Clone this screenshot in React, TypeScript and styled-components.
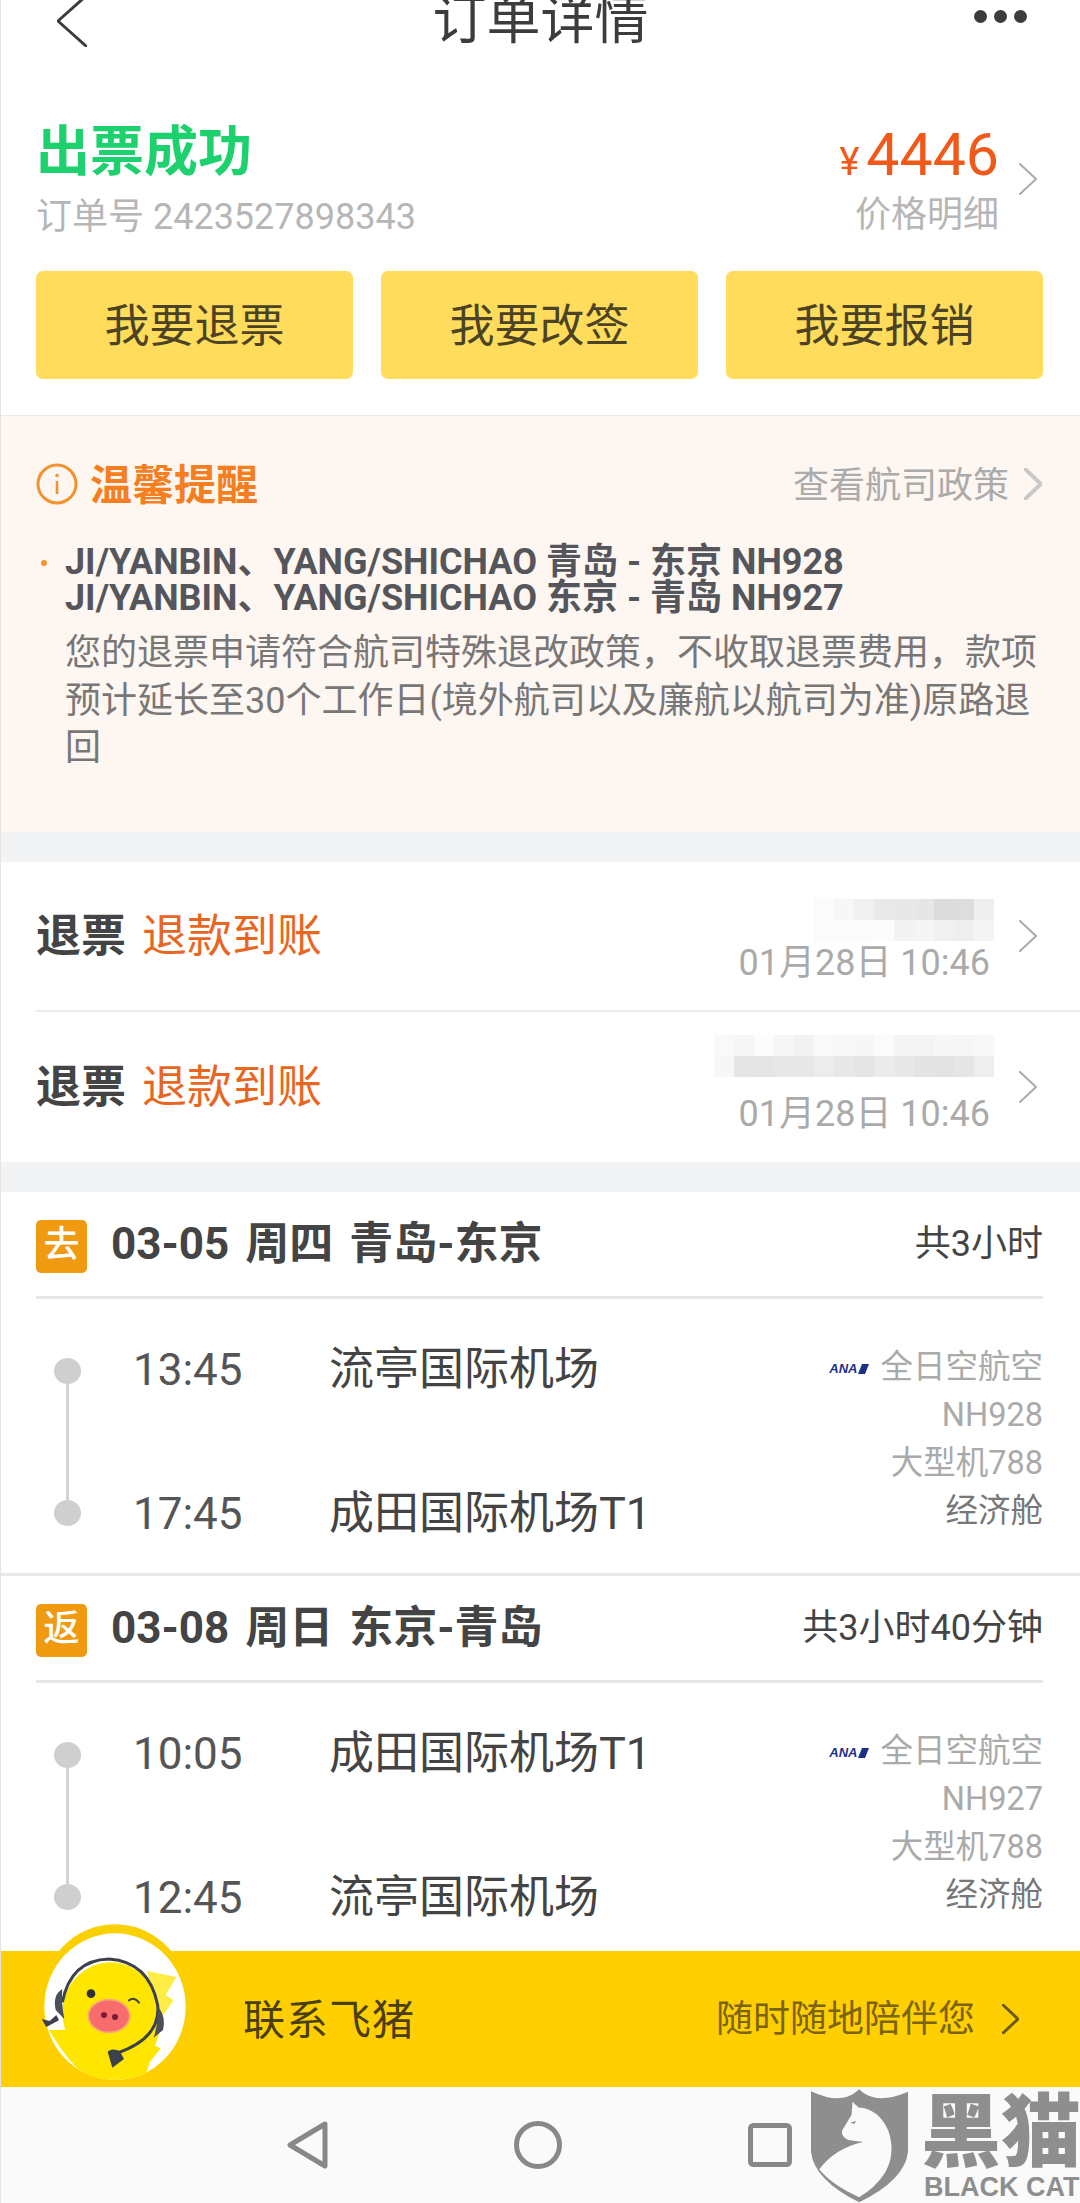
import React from "react";
import styled, { createGlobalStyle } from "styled-components";

const GlobalStyle = createGlobalStyle`
	html, body {
		margin: 0;
		padding: 0;
		background: #fff;
	}
	body {
		font-family: Roboto, "Noto Sans CJK SC", sans-serif;
	}
	* {
		box-sizing: border-box;
	}
`;

const Page = styled.div`
	position: relative;
	width: 1080px;
	height: 2203px;
	overflow: hidden;
	background: #fff;
	display: flex;
	flex-direction: column;
	&::after {
		content: "";
		position: absolute;
		left: 0;
		top: 0;
		bottom: 0;
		width: 1px;
		background: #e4e4e4;
	}
`;

/* top bar, the page is scrolled a little so the title is cut off */
const Header = styled.header`
	height: 41px;
	flex: none;
	display: flex;
	align-items: center;
	justify-content: space-between;
	padding: 0 53px 0 57px;
	overflow: visible;
`;

const HeaderTitle = styled.h1`
	margin: 0 0 0 20px;
	font-size: 54px;
	line-height: 60px;
	font-weight: 400;
	color: #3c3c3c;
	white-space: nowrap;
`;

const MoreDots = styled.div`
	display: flex;
	gap: 7px;
	margin-top: -8px;
	span {
		width: 13px;
		height: 13px;
		border-radius: 50%;
		background: #3c3c3c;
	}
`;

const Summary = styled.section`
	flex: none;
	height: 375px;
	padding: 82px 37px 0 36px;
	border-bottom: 1px solid #eeeae6;
`;

const StatusRow = styled.div`
	display: flex;
	justify-content: space-between;
	padding-right: 6px;
`;

const StatusTitle = styled.div`
	font-size: 54px;
	line-height: 60px;
	font-weight: 700;
	color: #1dd26e;
`;

const OrderNumber = styled.div`
	margin-top: 14px;
	font-size: 36px;
	line-height: 40px;
	color: #b6b6b6;
`;

const PriceLink = styled.div`
	display: flex;
	align-items: center;
	gap: 20px;
	margin-top: -2px;
`;

const PriceColumn = styled.div`
	display: flex;
	flex-direction: column;
	align-items: flex-end;
`;

const Price = styled.div`
	display: flex;
	align-items: baseline;
	gap: 7px;
	height: 72px;
	font-size: 59px;
	line-height: 68px;
	color: #f0591a;
	small {
		font-size: 38px;
	}
`;

const PriceHint = styled.div`
	font-size: 36px;
	line-height: 44px;
	color: #b6b6b6;
`;

const ButtonRow = styled.div`
	margin-top: 34px;
	display: grid;
	grid-template-columns: repeat(3, 1fr);
	gap: 28px;
`;

const ActionButton = styled.button`
	height: 108px;
	padding: 0 0 5px;
	border: none;
	border-radius: 7px;
	background: #ffdc5c;
	font-family: inherit;
	font-size: 45px;
	color: #4c4325;
`;

const Tip = styled.section`
	flex: none;
	height: 416px;
	padding: 46px 38px 0 36px;
	background: #fef6f1;
`;

const TipHeader = styled.div`
	display: flex;
	align-items: center;
	height: 44px;
`;

const TipTitle = styled.div`
	margin: -6px 0 0 12px;
	font-size: 42px;
	font-weight: 700;
	color: #f57f20;
`;

const PolicyLink = styled.div`
	margin-left: auto;
	display: flex;
	align-items: center;
	gap: 15px;
	font-size: 36px;
	color: #ababab;
	span {
		margin-top: -5px;
	}
`;

const TipBody = styled.div`
	display: flex;
	margin-top: 38px;
`;

const TipBullet = styled.span`
	flex: none;
	width: 6px;
	height: 6px;
	margin: 16px 18px 0 5px;
	border-radius: 50%;
	background: #f2932f;
`;

const Passengers = styled.div`
	font-size: 36px;
	line-height: 36px;
	font-weight: 700;
	color: #55565c;
	white-space: nowrap;
`;

const TipText = styled.p`
	margin: 14px 0 0;
	font-size: 36px;
	line-height: 47.5px;
	color: #777;
	width: 975px;
`;

const Gap = styled.div`
	flex: none;
	height: 30px;
	background: #f2f3f5;
`;

const RefundList = styled.section`
	flex: none;
	padding-left: 36px;
`;

const RefundRow = styled.div`
	height: 150px;
	display: flex;
	align-items: center;
	padding-right: 43px;
	font-size: 45px;
	&:first-child {
		border-bottom: 2px solid #ececec;
	}
`;

const RefundLabel = styled.div`
	margin-top: -8px;
`;

const RefundType = styled.span`
	font-weight: 700;
	color: #444;
`;

const RefundState = styled.span`
	margin-left: 16px;
	color: #e8661f;
`;

const RefundMeta = styled.div`
	margin-left: auto;
	margin-right: 29px;
	height: 150px;
	padding-bottom: 28px;
	display: flex;
	flex-direction: column;
	justify-content: flex-end;
	align-items: flex-end;
`;

const RefundDate = styled.div`
	font-size: 36px;
	line-height: 40px;
	color: #aaa;
`;

const Mosaic = styled.div<{ $gap: number }>`
	margin-bottom: ${(p) => p.$gap}px;
	margin-right: -4px;
	display: flex;
	flex-direction: column;
`;

const MosaicRow = styled.div`
	display: flex;
	justify-content: flex-end;
`;

const MosaicCell = styled.span<{ $tone: string }>`
	width: 20px;
	height: 21px;
	background: ${(p) => p.$tone};
`;

const FlightList = styled.div`
	flex: none;
	height: 759px;
	overflow: hidden;
`;

const Flight = styled.section`
	height: 384px;
	padding: 0 37px 0 36px;
	&::after {
		content: "";
		display: block;
		height: 3px;
		margin: 0 -37px 0 -36px;
		background: #e8e8e8;
	}
`;

const FlightHead = styled.div`
	height: 107px;
	display: flex;
	align-items: center;
	border-bottom: 3px solid #e6e6e6;
`;

const DirectionBadge = styled.span`
	width: 51px;
	height: 53px;
	flex: none;
	margin-top: 4px;
	border-radius: 5px;
	background: #f09a12;
	color: #fff;
	font-size: 36px;
	font-weight: 500;
	text-align: center;
	line-height: 50px;
`;

const FlightDate = styled.div`
	margin-left: 24px;
	font-size: 44px;
	font-weight: 700;
	color: #444;
	margin-top: -8px;
	word-spacing: 5px;
`;

const FlightDuration = styled.div`
	margin-left: auto;
	font-size: 36px;
	color: #444;
	margin-top: -8px;
`;

const FlightBody = styled.div`
	height: 274px;
	padding: 43px 0 0 18px;
	display: flex;
`;

const Rail = styled.div`
	width: 27px;
	height: 199px;
	padding: 16px 0 15px;
	flex: none;
	display: flex;
	flex-direction: column;
	align-items: center;
`;

const RailDot = styled.span`
	width: 27px;
	height: 26px;
	flex: none;
	border-radius: 50%;
	background: #cfcfcf;
`;

const RailLine = styled.span`
	width: 3px;
	flex: 1;
	background: #d4d4d4;
`;

const Stops = styled.div`
	height: 200px;
	margin-left: 52px;
	display: flex;
	flex-direction: column;
	justify-content: space-between;
`;

const Stop = styled.div`
	display: flex;
	height: 56px;
	line-height: 56px;
`;

const StopTime = styled.span`
	width: 196px;
	font-size: 44px;
	color: #555;
`;

const StopAirport = styled.span`
	font-size: 45px;
	color: #444;
`;

const FlightInfo = styled.div`
	margin-left: auto;
	padding-top: 1px;
	display: flex;
	flex-direction: column;
	align-items: flex-end;
	font-size: 32.5px;
	line-height: 48px;
	color: #aaa;
`;

const CabinClass = styled.div`
	color: #777;
`;

const AirlineRow = styled.div`
	display: flex;
	align-items: center;
	gap: 11px;
`;

const AirlineLogo = styled.span`
	display: inline-flex;
	align-items: center;
	font-family: "Liberation Sans", sans-serif;
	font-size: 13px;
	line-height: 12px;
	font-weight: 700;
	font-style: italic;
	color: #1d2f86;
	margin-top: 4px;
	gap: 1px;
	svg {
		display: block;
	}
`;

const ContactBar = styled.div`
	position: relative;
	flex: none;
	height: 136px;
	padding: 0 61px 0 243px;
	background: #ffcf02;
	display: flex;
	align-items: center;
`;

const Avatar = styled.svg`
	position: absolute;
	left: 29px;
	top: -36px;
	width: 170px;
	height: 175px;
`;

const ContactName = styled.div`
	margin-top: -6px;
	font-size: 42px;
	letter-spacing: 1px;
	color: #4a3f10;
`;

const ContactSlogan = styled.div`
	margin: -7px 27px 0 auto;
	font-size: 37px;
	color: #7a6410;
`;

const NavBar = styled.nav`
	flex: none;
	height: 116px;
	padding-left: 287px;
	background: #fafafa;
	display: flex;
	align-items: center;
	gap: 186px;
`;

const Watermark = styled.div`
	position: absolute;
	right: 0;
	bottom: 0;
	height: 114px;
	display: flex;
	gap: 13px;
	color: #8e8e8e;
	svg {
		display: block;
	}
`;

const WatermarkText = styled.div`
	width: 159px;
	display: flex;
	flex-direction: column;
	align-items: flex-start;
`;

const WatermarkName = styled.div`
	font-size: 80px;
	line-height: 76px;
	font-weight: 900;
	margin-top: 6px;
	white-space: nowrap;
`;

const WatermarkLatin = styled.div`
	font-family: "Liberation Sans", sans-serif;
	font-size: 27px;
	line-height: 24px;
	font-weight: 700;
	margin: 4px 0 0 3px;
	white-space: nowrap;
`;

const ChevronSvg = styled.svg<{ $color: string; $weight: number }>`
	flex: none;
	display: block;
	fill: none;
	stroke: ${(p) => p.$color};
	stroke-width: ${(p) => p.$weight};
	stroke-linecap: round;
	stroke-linejoin: round;
`;

function Chevron({ w = 18, h = 32, color = "#aaa", weight = 2, left = false }) {
	const d = left ? `M${w - 1} 1 L1 ${h / 2} L${w - 1} ${h - 1}` : `M1 1 L${w - 1} ${h / 2} L1 ${h - 1}`;
	return (
		<ChevronSvg $color={color} $weight={weight} width={w} height={h} viewBox={`0 0 ${w} ${h}`}>
			<path d={d} />
		</ChevronSvg>
	);
}

function InfoIcon() {
	return (
		<svg width="42" height="42" viewBox="0 0 42 42" fill="none">
			<circle cx="21" cy="21" r="19" stroke="#f2932f" strokeWidth="3" />
			<circle cx="21" cy="12.5" r="1.8" fill="#f2932f" />
			<path d="M21 18v13" stroke="#f2932f" strokeWidth="2.6" />
		</svg>
	);
}

function AnaTail() {
	return (
		<svg width="11" height="10" viewBox="0 0 11 10">
			<path d="M4 0h7L7 10H0z" fill="#1d2f86" />
		</svg>
	);
}

function Chick() {
	return (
		<Avatar viewBox="0 0 510 525">
			<defs>
				<clipPath id="avatar-clip">
					<ellipse cx="258" cy="275" rx="212" ry="220" />
				</clipPath>
			</defs>
			<ellipse cx="258" cy="262" rx="224" ry="234" fill="#fad000" />
			<ellipse cx="258" cy="275" rx="212" ry="220" fill="#fff" />
			<g clipPath="url(#avatar-clip)">
				<path d="M60 345 Q120 450 200 510 L340 510 L395 340 Z" fill="#ffe600" />
				<path d="M355 168 L442 186 L410 240 L434 256 L385 325 Z" fill="#ffec45" />
				<ellipse cx="245" cy="292" rx="145" ry="150" fill="#ffe600" />
				<path d="M340 470 L395 400 L345 380 Z" fill="#ffe600" />
			</g>
			<path d="M100 262 Q125 135 240 132 Q360 140 386 270 Q396 370 262 415" fill="none" stroke="#3c414c" strokeWidth="9" />
			<path d="M100 222 Q70 240 80 285 L106 312 Q96 262 100 222Z" fill="#4a4f5a" />
			<path d="M384 272 Q412 300 402 345 L374 368 Q390 320 384 272Z" fill="#4a4f5a" />
			<path d="M38 312 L62 318 L82 300 L90 316 L52 336 Z" fill="#3c414c" />
			<path d="M236 410 Q250 398 272 408 L285 432 L250 458 Z" fill="#3c414c" />
			<circle cx="186" cy="236" r="13" fill="#2f3138" />
			<path d="M300 256 Q316 244 330 263" fill="none" stroke="#3c414c" strokeWidth="6" strokeLinecap="round" />
			<ellipse cx="240" cy="303" rx="62" ry="49" fill="#f76d6b" stroke="#f8a878" strokeWidth="5" />
			<circle cx="225" cy="300" r="9" fill="#7a1b3a" />
			<circle cx="258" cy="306" r="9" fill="#7a1b3a" />
		</Avatar>
	);
}

function Shield() {
	return (
		<svg width="97" height="114" viewBox="33 27 292 342">
			<path
				d="M33 33 Q100 64 142 50 Q163 42 178 27 Q193 42 216 50 Q258 64 325 35 L325 215 Q316 300 178 367 Q42 300 33 215 Z"
				fill="#8e8e8e"
			/>
			<path
				d="M158 65 L176 82 Q235 85 265 150 Q290 220 255 280 Q225 325 178 352 Q95 315 58 268 Q105 205 190 186 L145 180 Q125 172 126 152 L155 105 Z"
				fill="#fafafa"
			/>
			<path d="M152 128 L168 122 L164 132 Z" fill="#8e8e8e" />
		</svg>
	);
}

const mosaicA = [
	["#fbfbfb", "#f7f7f7", "#f0f0f0", "#e9e9e9", "#e8e8e8", "#e6e6e6", "#dcdcdc", "#dddddd", "#efefef"],
	["#fbfbfb", "#fbfbfb", "#fbfbfb", "#fcfcfc", "#f3f3f3", "#f5f5f5", "#f0f0f0", "#eeeeee", "#f5f5f5"],
];

const mosaicB = [
	["#f9f9f9", "#f6f6f6", "#fcfcfc", "#f6f6f6", "#f2f2f2", "#f9f9f9", "#f8f8f8", "#f7f7f7", "#fbfbfb", "#f4f4f4", "#f4f4f4", "#f7f7f7", "#f6f6f6", "#f8f8f8"],
	["#f7f7f7", "#e6e6e6", "#e5e5e5", "#e7e7e7", "#e7e7e7", "#ececec", "#e8e8e8", "#e5e5e5", "#ebebeb", "#e8e8e8", "#e4e4e4", "#e3e3e3", "#e6e6e6", "#eeeeee"],
];

const refunds = [
	{ mosaic: mosaicA, gap: 2 },
	{ mosaic: mosaicB, gap: 17 },
];

const flights = [
	{
		badge: "去",
		date: "03-05 周四 青岛-东京",
		duration: "共3小时",
		stops: [
			["13:45", "流亭国际机场"],
			["17:45", "成田国际机场T1"],
		],
		number: "NH928",
	},
	{
		badge: "返",
		date: "03-08 周日 东京-青岛",
		duration: "共3小时40分钟",
		stops: [
			["10:05", "成田国际机场T1"],
			["12:45", "流亭国际机场"],
		],
		number: "NH927",
	},
];

export default function App() {
	return (
		<>
			<GlobalStyle />
			<Page>
				<Header>
					<Chevron w={30} h={52} color="#3c3c3c" weight={3} left />
					<HeaderTitle>订单详情</HeaderTitle>
					<MoreDots>
						<span />
						<span />
						<span />
					</MoreDots>
				</Header>

				<Summary>
					<StatusRow>
						<div>
							<StatusTitle>出票成功</StatusTitle>
							<OrderNumber>订单号 2423527898343</OrderNumber>
						</div>
						<PriceLink>
							<PriceColumn>
								<Price>
									<small>¥</small>4446
								</Price>
								<PriceHint>价格明细</PriceHint>
							</PriceColumn>
							<Chevron />
						</PriceLink>
					</StatusRow>
					<ButtonRow>
						<ActionButton>我要退票</ActionButton>
						<ActionButton>我要改签</ActionButton>
						<ActionButton>我要报销</ActionButton>
					</ButtonRow>
				</Summary>

				<Tip>
					<TipHeader>
						<InfoIcon />
						<TipTitle>温馨提醒</TipTitle>
						<PolicyLink>
							<span>查看航司政策</span>
							<Chevron color="#c8c8c8" weight={4} />
						</PolicyLink>
					</TipHeader>
					<TipBody>
						<TipBullet />
						<div>
							<Passengers>
								JI/YANBIN、YANG/SHICHAO 青岛 - 东京 NH928
								<br />
								JI/YANBIN、YANG/SHICHAO 东京 - 青岛 NH927
							</Passengers>
							<TipText>
								您的退票申请符合航司特殊退改政策，不收取退票费用，款项预计延长至30个工作日(境外航司以及廉航以航司为准)原路退回
							</TipText>
						</div>
					</TipBody>
				</Tip>

				<Gap />

				<RefundList>
					{refunds.map((r, i) => (
						<RefundRow key={i}>
							<RefundLabel>
								<RefundType>退票</RefundType>
								<RefundState>退款到账</RefundState>
							</RefundLabel>
							<RefundMeta>
								<Mosaic $gap={r.gap}>
									{r.mosaic.map((row, y) => (
										<MosaicRow key={y}>
											{row.map((tone, x) => (
												<MosaicCell key={x} $tone={tone} />
											))}
										</MosaicRow>
									))}
								</Mosaic>
								<RefundDate>01月28日 10:46</RefundDate>
							</RefundMeta>
							<Chevron />
						</RefundRow>
					))}
				</RefundList>

				<Gap />

				<FlightList>
					{flights.map((f) => (
						<Flight key={f.number}>
							<FlightHead>
								<DirectionBadge>{f.badge}</DirectionBadge>
								<FlightDate>{f.date}</FlightDate>
								<FlightDuration>{f.duration}</FlightDuration>
							</FlightHead>
							<FlightBody>
								<Rail>
									<RailDot />
									<RailLine />
									<RailDot />
								</Rail>
								<Stops>
									{f.stops.map(([time, airport]) => (
										<Stop key={time}>
											<StopTime>{time}</StopTime>
											<StopAirport>{airport}</StopAirport>
										</Stop>
									))}
								</Stops>
								<FlightInfo>
									<AirlineRow>
										<AirlineLogo>
											ANA
											<AnaTail />
										</AirlineLogo>
										全日空航空
									</AirlineRow>
									<div>{f.number}</div>
									<div>大型机788</div>
									<CabinClass>经济舱</CabinClass>
								</FlightInfo>
							</FlightBody>
						</Flight>
					))}
				</FlightList>

				<ContactBar>
					<Chick />
					<ContactName>联系飞猪</ContactName>
					<ContactSlogan>随时随地陪伴您</ContactSlogan>
					<Chevron w={17} h={30} color="#6b5a10" weight={3} />
				</ContactBar>

				<NavBar>
					<svg width="41" height="48" viewBox="0 0 41 48" fill="none">
						<path d="M38 3 L3 24 L38 45 Z" stroke="#888" strokeWidth="5" strokeLinejoin="round" />
					</svg>
					<svg width="48" height="48" viewBox="0 0 48 48" fill="none">
						<circle cx="24" cy="24" r="21.5" stroke="#888" strokeWidth="5" />
					</svg>
					<svg width="44" height="44" viewBox="0 0 44 44" fill="none">
						<rect x="2.5" y="2.5" width="39" height="39" rx="3" stroke="#888" strokeWidth="5" />
					</svg>
				</NavBar>

				<Watermark>
					<Shield />
					<WatermarkText>
						<WatermarkName>黑猫</WatermarkName>
						<WatermarkLatin>BLACK CAT</WatermarkLatin>
					</WatermarkText>
				</Watermark>
			</Page>
		</>
	);
}
